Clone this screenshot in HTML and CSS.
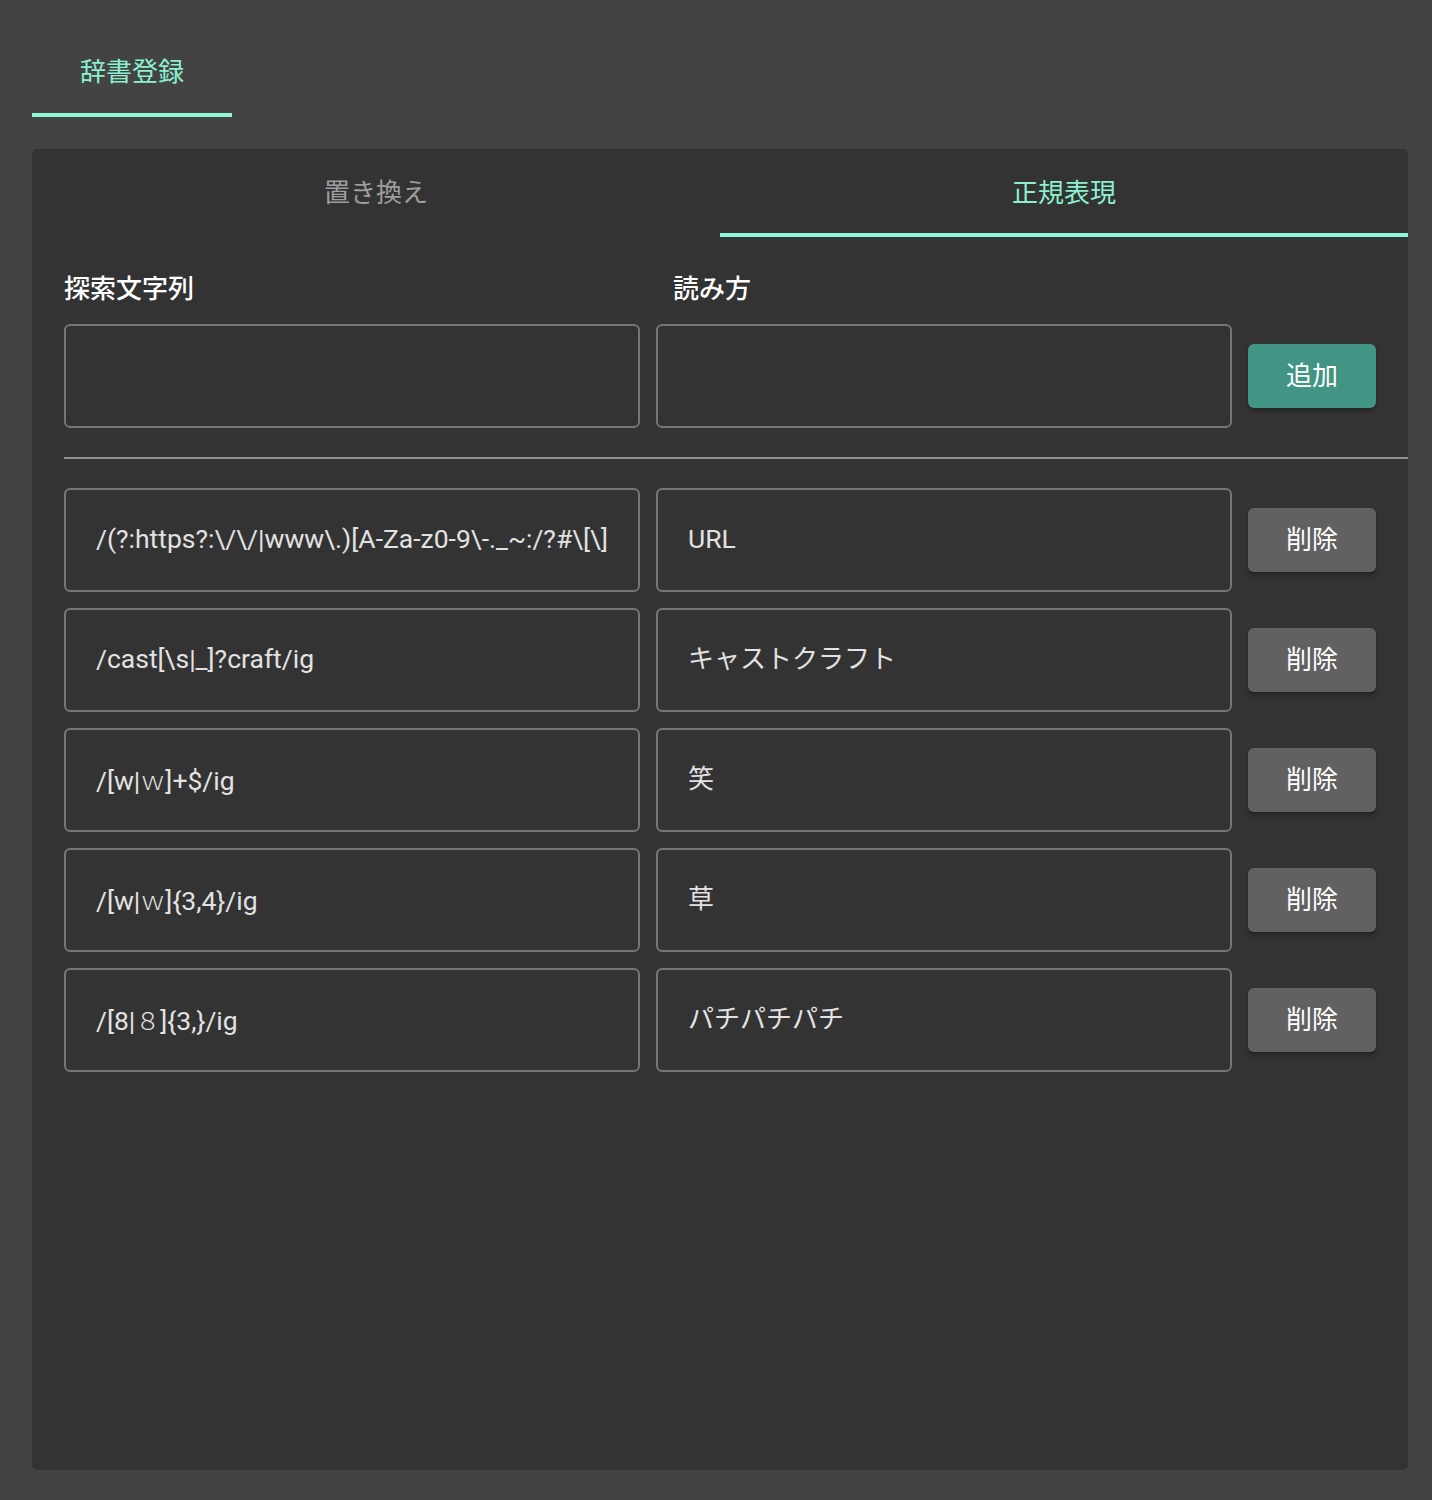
FILE: index.html
```html
<!DOCTYPE html>
<html lang="ja">
<head>
<meta charset="utf-8">
<title>辞書登録</title>
<link rel="stylesheet" href="styles.css">
</head>
<body>
<div class="page">
  <nav class="top-tabs">
    <div class="top-tab active">辞書登録</div>
  </nav>
  <section class="card">
    <div class="sub-tabs">
      <div class="sub-tab">置き換え</div>
      <div class="sub-tab active">正規表現</div>
    </div>
    <div class="content">
      <div class="labels">
        <div class="label">探索文字列</div>
        <div class="label label-second">読み方</div>
      </div>
      <div class="row">
        <div class="field"></div>
        <div class="field"></div>
        <button class="btn btn-add">追加</button>
      </div>
      <div class="divider"></div>
      <div class="list">
        <div class="row">
          <div class="field"><span class="val">/(?:https?:\/\/|www\.)[A-Za-z0-9\-._~:/?#\[\]</span></div>
          <div class="field"><span class="val">URL</span></div>
          <button class="btn btn-del">削除</button>
        </div>
        <div class="row">
          <div class="field"><span class="val">/cast[\s|_]?craft/ig</span></div>
          <div class="field"><span class="val jp">キャストクラフト</span></div>
          <button class="btn btn-del">削除</button>
        </div>
        <div class="row">
          <div class="field"><span class="val">/[w|<span class="fw">ｗ</span>]+$/ig</span></div>
          <div class="field"><span class="val jp">笑</span></div>
          <button class="btn btn-del">削除</button>
        </div>
        <div class="row">
          <div class="field"><span class="val">/[w|<span class="fw">ｗ</span>]{3,4}/ig</span></div>
          <div class="field"><span class="val jp">草</span></div>
          <button class="btn btn-del">削除</button>
        </div>
        <div class="row">
          <div class="field"><span class="val">/[8|<span class="fw">８</span>]{3,}/ig</span></div>
          <div class="field"><span class="val jp">パチパチパチ</span></div>
          <button class="btn btn-del">削除</button>
        </div>
      </div>
    </div>
  </section>
</div>
</body>
</html>
```

FILE: styles.css
```css
* { box-sizing: border-box; }

html, body {
  margin: 0;
  padding: 0;
  background: #434343;
}

body {
  font-family: Roboto, "Noto Sans CJK JP", sans-serif;
  font-size: 26px;
  color: #e6e6e6;
}

.page {
  padding: 28px 24px 30px 32px;
}

.top-tabs {
  display: flex;
}

.top-tab {
  width: 200px;
  height: 89px;
  display: flex;
  align-items: center;
  justify-content: center;
  padding-bottom: 2px;
  color: #8cf0d0;
  border-bottom: 4px solid #8ef8d8;
}

.card {
  margin-top: 32px;
  height: 1321px;
  background: #333333;
  border-radius: 5px;
}

.sub-tabs {
  display: flex;
}

.sub-tab {
  flex: 1;
  height: 88px;
  display: flex;
  align-items: center;
  justify-content: center;
  padding-bottom: 2px;
  color: #9e9e9e;
  border-bottom: 4px solid transparent;
}

.sub-tab.active {
  color: #8cf0d0;
  border-bottom-color: #8ef8d8;
}

.content {
  padding: 36px 32px 0 32px;
}

.labels {
  display: flex;
  height: 32px;
  line-height: 32px;
  margin-bottom: 19px;
}

.label {
  width: 609px;
  color: #ffffff;
  font-weight: 500;
}

.row {
  display: flex;
  align-items: center;
  gap: 16px;
}

.field {
  width: 576px;
  height: 104px;
  border: 2px solid #757575;
  border-radius: 6px;
  padding: 0 30px 3px 30px;
  display: flex;
  align-items: center;
  overflow: hidden;
  white-space: nowrap;
}

.val {
  color: #e2e2e2;
  font-size: 26.5px;
}

.val.jp {
  font-size: 26px;
  position: relative;
  top: -2px;
}

.fw {
  font-family: "Noto Sans CJK JP", sans-serif;
  font-weight: 300;
  font-size: 25px;
}

.btn {
  width: 128px;
  height: 64px;
  border: none;
  border-radius: 6px;
  font-family: inherit;
  font-size: 26px;
  color: #ffffff;
  box-shadow: 0 3px 4px rgba(0, 0, 0, 0.3);
  padding: 0 0 5px 0;
}

.btn-add {
  background: #429485;
}

.btn-del {
  background: #616161;
}

.divider {
  height: 2px;
  background: #8f8f8f;
  margin: 29px -32px 29px 0;
}

.list {
  display: flex;
  flex-direction: column;
  gap: 16px;
}
```
